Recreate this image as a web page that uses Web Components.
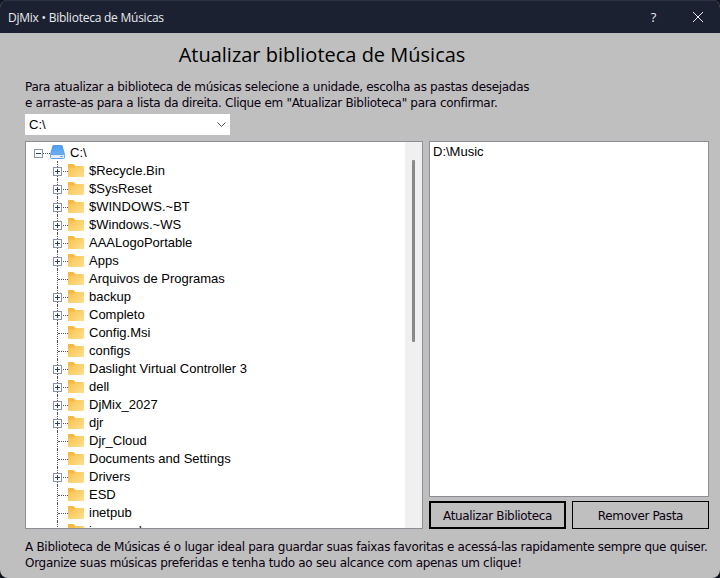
<!DOCTYPE html>
<html>
<head>
<meta charset="utf-8">
<title>DjMix</title>
<style>
  html, body { margin: 0; padding: 0; height: 100%; background: #10151f; overflow: hidden; }
</style>
</head>
<body>
<dj-window>
  <dj-titlebar slot="bar">DjMix • Biblioteca de Músicas</dj-titlebar>
  <h-heading>Atualizar biblioteca de Músicas</h-heading>
  <dj-note>Para atualizar a biblioteca de músicas selecione a unidade, escolha as pastas desejadas<br>e arraste-as para a lista da direita. Clique em "Atualizar Biblioteca" para confirmar.</dj-note>
  <dj-combo>C:\</dj-combo>
  <dj-panels></dj-panels>
  <dj-note>A Biblioteca de Músicas é o lugar ideal para guardar suas faixas favoritas e acessá-las rapidamente sempre que quiser.<br>Organize suas músicas preferidas e tenha tudo ao seu alcance com apenas um clique!</dj-note>
</dj-window>

<script>
const FOLDER = `<svg width="16" height="13" viewBox="0 0 16 13">
  <defs><linearGradient id="f" x1="0" y1="0" x2="1" y2="1"><stop offset="0" stop-color="#f8bd45"/><stop offset="1" stop-color="#ffe08f"/></linearGradient></defs>
  <path d="M0 1C0 .4.4 0 1 0h4.2l2 2H15c.6 0 1 .4 1 1v9c0 .6-.4 1-1 1H1c-.6 0-1-.4-1-1z" fill="url(#f)"/>
  <path d="M0 3.4h5.6L7.2 2 5.2 0H1C.4 0 0 .4 0 1z" fill="#f7b93f"/>
</svg>`

const DRIVE = `<svg width="15" height="14" viewBox="0 0 15 14">
  <defs><linearGradient id="d" x1="0" y1="0" x2="0" y2="1"><stop offset="0" stop-color="#4e9cef"/><stop offset="1" stop-color="#6bb0f5"/></linearGradient></defs>
  <path d="M3 .5h9L14.6 9.5H.4z" fill="url(#d)" stroke="#3c87e0" stroke-width=".7"/>
  <rect x=".5" y="9.5" width="14" height="4" rx=".8" fill="#e3eefa" stroke="#5ea2ec"/>
  <rect x="10.5" y="11" width="2" height="1" fill="#3c87e0"/>
</svg>`

class DjWindow extends HTMLElement {
  constructor() {
    super()
    this.attachShadow({mode: 'open'}).innerHTML = `
      <style>
        :host { display: flex; flex-direction: column; width: 720px; height: 578px; box-sizing: border-box;
                background: #bfbfbf; border-radius: 8px; overflow: hidden; color: #000; }
      </style>
      <slot name="bar"></slot>
      <slot></slot>`
  }
}

class DjTitlebar extends HTMLElement {
  constructor() {
    super()
    this.attachShadow({mode: 'open'}).innerHTML = `
      <style>
        :host { display: flex; align-items: center; justify-content: space-between; height: 33px; flex: none;
                background: #1b2130; color: #e8eaee; padding: 0 17px 0 8px; box-sizing: border-box;
                font: 12px "Open Sans", sans-serif; letter-spacing: -.24px; border-top: 1px solid #2b3242; }
        .btns { display: flex; align-items: center; gap: 37px; font-size: 13px; }
        svg { display: block; }
      </style>
      <span><slot></slot></span>
      <span class="btns"><span>?</span>
        <svg width="10" height="10" viewBox="0 0 10 10"><path d="M0 0l10 10M10 0L0 10" stroke="#e8eaee" fill="none"/></svg>
      </span>`
  }
}

class HHeading extends HTMLElement {
  constructor() {
    super()
    this.attachShadow({mode: 'open'}).innerHTML = `
      <style>
        :host { display: block; height: 28px; margin: 8px 0 0 0; text-align: center; padding-right: 76px;
                font: 20px/28px "Open Sans", sans-serif; color: #000; }
      </style>
      <slot></slot>`
  }
}

class DjNote extends HTMLElement {
  constructor() {
    super()
    this.attachShadow({mode: 'open'}).innerHTML = `
      <style>
        :host { display: block; padding: 10px 0 0 25px; font: 12px/16px "DejaVu Sans", sans-serif;
                letter-spacing: -.3px; white-space: nowrap; color: #0a0010; }
      </style>
      <slot></slot>`
  }
}

class DjCombo extends HTMLElement {
  constructor() {
    super()
    this.attachShadow({mode: 'open'}).innerHTML = `
      <style>
        :host { display: flex; align-items: center; justify-content: space-between; box-sizing: border-box;
                width: 205px; height: 21px; margin: 3px 0 0 25px; padding: 0 4px 0 4px; background: #fff;
                font: 13px "Liberation Sans", sans-serif; }
      </style>
      <slot></slot>
      <svg width="9" height="5" viewBox="0 0 9 5"><path d="M.5.5l4 4 4-4" fill="none" stroke="#555"/></svg>`
  }
}

class DjTreeRow extends HTMLElement {
  constructor() {
    super()
    const more = this.hasAttribute('more')
    this.attachShadow({mode: 'open'}).innerHTML = `
      <style>
        :host { display: flex; align-items: center; height: 18px; flex: none; position: relative; padding-left: 27px;
                font: 13px "Liberation Sans", sans-serif; color: #000; white-space: nowrap; }
        .box { position: absolute; left: 27px; top: 6px; width: 9px; height: 9px; box-sizing: border-box; background: #fff;
               border: 1px solid #8a94a6; }
        .box::before { content: ""; position: absolute; left: 1px; right: 1px; top: 3px; height: 1px; background: #28406e; }
        .box::after { content: ""; position: absolute; top: 1px; bottom: 1px; left: 3px; width: 1px; background: #28406e; }
        .dash { width: 10px; margin-left: 5px; margin-top: 2px; border-top: 1px dotted #555; }
        .dots { position: absolute; left: 31px; top: 0; bottom: 0; border-left: 1px dotted #555; }
        .ico { margin: 0 5px 0 0; display: block; height: 13px; }
        .ico svg { display: block; }
      </style>
      <span class="dots"></span>
      <span class="dash"></span>
      ${more ? '<span class="box"></span>' : ''}
      <span class="ico">${FOLDER}</span>
      <slot></slot>`
  }
}

class DjTree extends HTMLElement {
  constructor() {
    super()
    const rows = [
      ['$Recycle.Bin', 1], ['$SysReset', 1], ['$WINDOWS.~BT', 1], ['$Windows.~WS', 1], ['AAALogoPortable', 1],
      ['Apps', 1], ['Arquivos de Programas', 0], ['backup', 1], ['Completo', 1], ['Config.Msi', 0], ['configs', 0],
      ['Daslight Virtual Controller 3', 1], ['dell', 1], ['DjMix_2027', 1], ['djr', 1], ['Djr_Cloud', 0],
      ['Documents and Settings', 0], ['Drivers', 1], ['ESD', 0], ['inetpub', 0], ['ionsound', 0]
    ]
    this.attachShadow({mode: 'open'}).innerHTML = `
      <style>
        :host { display: flex; box-sizing: border-box; width: 398px; height: 388px; flex: none; background: #fff;
                border: 1px solid #8d8d96; overflow: hidden; }
        .rows { flex: 1; display: flex; flex-direction: column; padding-top: 1px; overflow: hidden; min-width: 0; }
        .root { display: flex; align-items: center; height: 18px; flex: none; padding-left: 8px;
                font: 13px "Liberation Sans", sans-serif; position: relative; }
        .root .box { width: 9px; height: 9px; margin-top: 2px; box-sizing: border-box; background: #fff; border: 1px solid #8a94a6; position: relative; flex: none; }
        .root .box::before { content: ""; position: absolute; left: 1px; right: 1px; top: 3px; height: 1px; background: #28406e; }
        .root .dash { width: 7px; margin-top: 2px; border-top: 1px dotted #555; }
        .root svg { display: block; margin-right: 5px; }
        .bar { width: 17px; flex: none; background: #f0f0f0; display: flex; justify-content: center; padding-top: 18px; box-sizing: border-box; }
        .thumb { width: 3px; height: 182px; background: #8a8a8a; border-radius: 1px; }
      </style>
      <div class="rows">
        <div class="root"><span class="box"></span><span class="dash"></span>${DRIVE}<span>C:\\</span></div>
        ${rows.map(r => `<dj-tree-row ${r[1] ? 'more' : ''}>${r[0]}</dj-tree-row>`).join('')}
      </div>
      <div class="bar"><div class="thumb"></div></div>`
  }
}

class DjButton extends HTMLElement {
  constructor() {
    super()
    this.attachShadow({mode: 'open'}).innerHTML = `
      <style>
        :host { display: flex; align-items: center; justify-content: center; box-sizing: border-box; height: 28px; background: #bfbfbf;
                border: 1px solid #000; padding-top: 1px; font: 12px "DejaVu Sans", sans-serif; letter-spacing: -.35px; color: #0a0010; }
        :host([primary]) { border-width: 2px; }
      </style>
      <slot></slot>`
  }
}

class DjPanels extends HTMLElement {
  constructor() {
    super()
    this.attachShadow({mode: 'open'}).innerHTML = `
      <style>
        :host { display: flex; gap: 6px; margin: 6px 0 0 25px; height: 388px; }
        .side { display: flex; flex-direction: column; gap: 4px; width: 280px; }
        .list { height: 356px; box-sizing: border-box; background: #fff; border: 1px solid #8d8d96; padding: 2px 3px;
                font: 13px "Liberation Sans", sans-serif; color: #000; }
        .btns { display: flex; gap: 6px; }
        dj-button { flex: none; width: 137px; }
      </style>
      <dj-tree></dj-tree>
      <div class="side">
        <div class="list">D:\\Music</div>
        <div class="btns"><dj-button primary>Atualizar Biblioteca</dj-button><dj-button>Remover Pasta</dj-button></div>
      </div>`
  }
}

customElements.define('dj-window', DjWindow)
customElements.define('dj-titlebar', DjTitlebar)
customElements.define('h-heading', HHeading)
customElements.define('dj-note', DjNote)
customElements.define('dj-combo', DjCombo)
customElements.define('dj-tree-row', DjTreeRow)
customElements.define('dj-tree', DjTree)
customElements.define('dj-button', DjButton)
customElements.define('dj-panels', DjPanels)
</script>
</body>
</html>
